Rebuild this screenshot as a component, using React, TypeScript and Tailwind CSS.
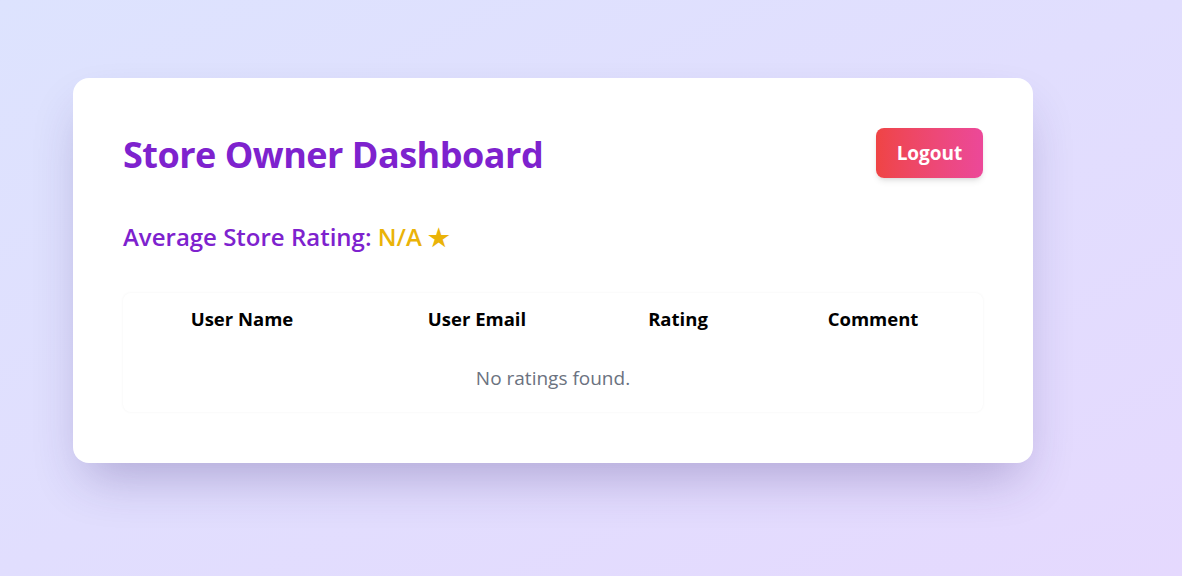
import React from "react";

export default function App() {
  const font = { fontFamily: '"Open Sans", "Noto Sans", sans-serif' };
  return (
    <div
      className="min-h-[576px] w-full bg-gradient-to-br from-[#dde3fe] to-[#e5d9fe] pt-[78px] pl-[73px]"
      style={font}
    >
      <div className="w-[960px] rounded-2xl bg-white px-[50px] pt-[50px] pb-[51px] shadow-[0_25px_50px_-12px_rgba(60,40,120,0.3)]">
        <div className="flex h-[50px] items-center justify-between">
          <h1 className="mt-[3px] text-[36px] font-bold leading-none tracking-[-0.5px] text-[#7e22ce]">
            Store Owner Dashboard
          </h1>
          <button className="h-[50px] w-[107px] rounded-lg bg-gradient-to-r from-[#ef4444] to-[#ec4899] text-[19px] font-bold text-white shadow-md">
            Logout
          </button>
        </div>
        <div className="mt-[44px] text-[24px] font-semibold leading-[30px] text-[#7e22ce]">
          Average Store Rating: <span className="text-[#eab308]">N/A ★</span>
        </div>
        <div className="mt-[41px] overflow-hidden rounded-lg bg-white shadow-[0_0_3px_rgba(0,0,0,0.05)]">
          <table className="w-[860px] table-fixed border-collapse">
            <colgroup>
              <col className="w-[238px]" />
              <col className="w-[232px]" />
              <col className="w-[170px]" />
              <col className="w-[220px]" />
            </colgroup>
            <thead>
              <tr className="h-[52px]">
                <th className="text-center text-[18.5px] font-bold text-black">User Name</th>
                <th className="text-center text-[18.5px] font-bold text-black">User Email</th>
                <th className="text-center text-[18.5px] font-bold text-black">Rating</th>
                <th className="text-center text-[18.5px] font-bold text-black">Comment</th>
              </tr>
            </thead>
            <tbody>
              <tr className="h-[67px]">
                <td colSpan={4} className="text-center text-[19px] text-[#6b7280]">
                  No ratings found.
                </td>
              </tr>
            </tbody>
          </table>
        </div>
      </div>
    </div>
  );
}
